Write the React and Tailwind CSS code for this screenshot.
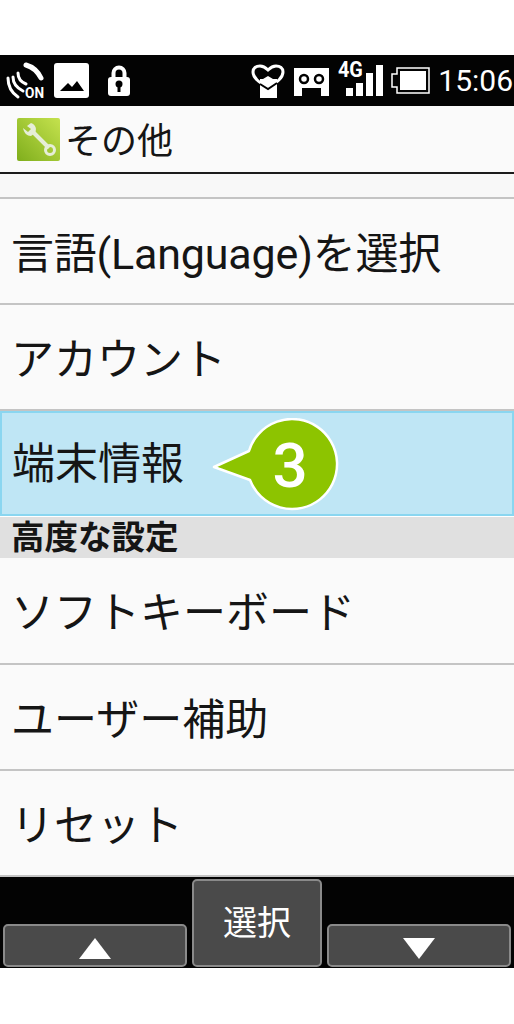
import React from 'react';

const font = "font-['Roboto','Noto_Sans_CJK_JP',sans-serif]";

const Signal = () => (
    <svg width="44" height="42" viewBox="0 0 44 42" fill="none" className="ml-[5px] shrink-0">
        <path d="M21 5 C28 7 33 12 36 18" stroke="#fff" strokeWidth="5" strokeLinecap="round" />
        <path d="M3 18 C3 26 7 33 13 37" stroke="#fff" strokeWidth="3" strokeLinecap="round" />
        <path d="M8 17 C8 23 12 28 18 31" stroke="#fff" strokeWidth="3" strokeLinecap="round" />
        <path d="M13 13 C13 18 16 22 21 24" stroke="#fff" strokeWidth="3" strokeLinecap="round" />
        <text x="20" y="38" fill="#fff" fontSize="14" fontWeight="700" fontFamily="Roboto, sans-serif" textLength="19" lengthAdjust="spacingAndGlyphs">ON</text>
    </svg>
);

const Picture = () => (
    <svg width="35" height="35" viewBox="0 0 35 35" className="ml-[5px] shrink-0">
        <rect width="35" height="35" rx="3" fill="#fff" />
        <path d="M6 28 L14 20 L18 24 L23 18 L30 28 Z" fill="#000" />
    </svg>
);

const Lock = () => (
    <svg width="22" height="31" viewBox="0 0 22 31" className="ml-[19px] shrink-0">
        <path d="M5.5 14 V8 a5.5 5.5 0 0 1 11 0 V14" fill="none" stroke="#fff" strokeWidth="4" />
        <rect x="0" y="12" width="22" height="19" rx="3" fill="#fff" />
        <circle cx="11" cy="19" r="3.5" fill="#000" />
        <rect x="9.5" y="19" width="3" height="8" fill="#000" />
    </svg>
);

const Heart = () => (
    <svg width="34" height="34" viewBox="0 0 34 34" className="shrink-0">
        <path d="M17 24 C8 18 2 14 2 8 C2 4 5 2 9 2 C13 2 15 4 17 6 C19 4 21 2 25 2 C29 2 32 4 32 8 C32 14 26 18 17 24 Z" fill="none" stroke="#fff" strokeWidth="3" />
        <path d="M9 15 L12 15 L17 12 L22 15 L26 15 L26 34 L9 34 Z" fill="#fff" />
        <path d="M9 20 L17 25 L26 19" fill="none" stroke="#000" strokeWidth="2" />
    </svg>
);

const Tape = () => (
    <svg width="35" height="28" viewBox="0 0 35 28" className="ml-[9px] mt-[3px] shrink-0">
        <path d="M0 0 H35 V28 H27 V20 H8 V28 H0 Z" fill="#fff" />
        <circle cx="10" cy="11" r="4" fill="none" stroke="#000" strokeWidth="2.5" />
        <circle cx="25" cy="11" r="4" fill="none" stroke="#000" strokeWidth="2.5" />
    </svg>
);

const Bars = () => (
    <div className="relative w-[45px] h-[34px] ml-[9px] mb-[3px] shrink-0">
        <span className="absolute left-0 top-[-3px] font-['Roboto',sans-serif] font-bold text-[22px] leading-[22px] text-white scale-x-90 origin-left">4G</span>
        <div className="absolute left-[8px] bottom-0 flex items-end gap-[3px]">
            <div className="w-[7px] h-[8px] bg-white" />
            <div className="w-[7px] h-[13px] bg-white" />
            <div className="w-[7px] h-[23px] bg-white" />
            <div className="w-[7px] h-[31px] bg-white" />
        </div>
    </div>
);

const Battery = () => (
    <svg width="39" height="27" viewBox="0 0 39 27" className="ml-[8px] shrink-0">
        <path d="M6 1 H38 V26 H6 V20 H1 V7 H6 Z" fill="none" stroke="#fff" strokeWidth="1.5" />
        <rect x="9" y="4" width="26" height="19" fill="#fff" />
    </svg>
);

const Wrench = () => (
    <svg width="43" height="43" viewBox="0 0 43 43" className="shrink-0">
        <defs>
            <linearGradient id="wrench-bg" x1="1" y1="0" x2="0" y2="1">
                <stop offset="0" stopColor="#c5e24e" />
                <stop offset="1" stopColor="#7fae1c" />
            </linearGradient>
        </defs>
        <rect width="43" height="43" rx="2" fill="url(#wrench-bg)" />
        <path d="M16 14 L32 30" stroke="#e6eed8" strokeWidth="4" />
        <path d="M10 8 L14 5 C19 7 20 11 18 15 L14 18 C10 18 7 15 6 10 L11 14 L14 11 Z" fill="#e6eed8" />
        <circle cx="33" cy="32" r="4.5" fill="none" stroke="#e6eed8" strokeWidth="3" />
    </svg>
);

const Row = ({ children, h }) => (
    <div className={`${h} flex items-center pl-[11px] pt-[6px] text-[43px] leading-none text-[#151515] bg-[#fafafa] border-b-2 border-[#c4c4c4]`}>
        {children}
    </div>
);

export default function App() {
    return (
        <div className={`w-[514px] h-[1024px] bg-white overflow-hidden ${font}`}>
            <div className="h-[55px]" />

            <div className="h-[51px] bg-[#030303] flex items-center pr-px">
                <Signal />
                <Picture />
                <Lock />
                <div className="flex-1" />
                <Heart />
                <Tape />
                <Bars />
                <Battery />
                <span className="ml-[8px] text-[30px] leading-none text-white font-['Roboto',sans-serif]">15:06</span>
            </div>

            <div className="h-[66px] bg-[#fafafa] flex items-center pl-[17px]">
                <Wrench />
                <span className="ml-[5px] mt-[6px] text-[36px] leading-none text-[#151515]">その他</span>
            </div>
            <div className="h-[2px] bg-[#1c1c1c]" />
            <div className="h-[25px] bg-[#f8f8f8] border-b-2 border-[#c4c4c4]" />

            <Row h="h-[106px]"><span className="tracking-[-0.2px]">言語(Language)を選択</span></Row>
            <Row h="h-[106px]">アカウント</Row>

            <div className="relative h-[105px] flex items-center pl-[10px] pt-[2px] text-[43px] leading-none text-[#151515] bg-[#bfe6f5] border-2 border-[#8ad6f0]">
                端末情報
                <svg width="128" height="94" viewBox="0 0 128 94" className="absolute left-[210px] top-[5px]">
                    <path d="M2 49 L37 33 A45 45 0 1 1 38 62 Z" fill="#8dc400" stroke="#fff" strokeWidth="2.5" strokeLinejoin="round" />
                </svg>
                <span className="absolute left-[266px] top-[23px] w-[44px] text-center font-['Roboto',sans-serif] font-medium text-[62px] leading-[60px] text-white">3</span>
            </div>

            <div className="h-[41px] mt-px bg-[#e0e0e0] flex items-center pl-[11px] text-[33.5px] leading-none font-bold text-[#151515]">
                高度な設定
            </div>

            <Row h="h-[107px]">ソフトキーボード</Row>
            <Row h="h-[106px]">ユーザー補助</Row>
            <Row h="h-[106px]">リセット</Row>

            <div className="h-[91px] bg-[#030303] flex items-end gap-[5px] px-[3px] pb-px">
                <div className="w-[184px] h-[43px] bg-[#4a4a4a] border-2 border-[#8a8a8a] rounded-[5px] flex items-center justify-center">
                    <div className="mt-[6px] w-0 h-0 border-x-[16px] border-x-transparent border-b-[21px] border-b-white" />
                </div>
                <div className="w-[130px] h-[88px] bg-[#4a4a4a] border-2 border-[#8a8a8a] rounded-[5px] flex items-center justify-center text-[34px] leading-none text-white">
                    選択
                </div>
                <div className="w-[184px] h-[43px] bg-[#4a4a4a] border-2 border-[#8a8a8a] rounded-[5px] flex items-center justify-center">
                    <div className="mt-[6px] w-0 h-0 border-x-[16px] border-x-transparent border-t-[21px] border-t-white" />
                </div>
            </div>
        </div>
    );
}
